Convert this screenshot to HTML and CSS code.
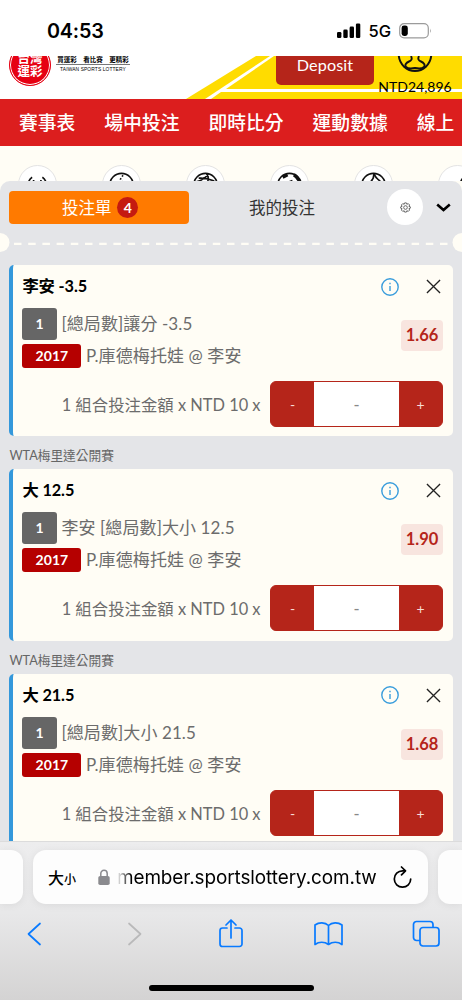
FILE: index.html
```html
<!DOCTYPE html>
<html lang="zh-Hant">
<head>
<meta charset="utf-8">
<meta name="viewport" content="width=device-width">
<title>台灣運彩</title>
<link rel="stylesheet" href="styles.css">
</head>
<body>
<div class="phone">
  <div class="status">
    <span class="clock">04:53</span>
    <svg class="signal" width="24" height="16" viewBox="0 0 24 16"><rect x="0" y="9" width="4.4" height="6" rx="1.3"/><rect x="6.3" y="6.6" width="4.4" height="8.4" rx="1.3"/><rect x="12.6" y="3.6" width="4.4" height="11.4" rx="1.3"/><rect x="18.9" y="0.4" width="4.4" height="14.6" rx="1.3"/></svg>
    <span class="net">5G</span>
    <svg class="battery" width="33" height="16" viewBox="0 0 33 16"><rect x=".7" y=".7" width="28.6" height="14.2" rx="4.4" fill="none" stroke="#9b9b9b" stroke-width="1.2"/><rect x="2.6" y="2.6" width="6.2" height="10.4" rx="2.4"/><path d="M31 5.5q1.6 2.3 0 4.6z" fill="#9b9b9b"/></svg>
  </div>

  <header class="brandbar">
    <svg class="stripes" width="462" height="43" viewBox="0 0 462 43" fill="#ffdc00"><path d="M186 43 256 0H270L205 43z"/><path d="M274 0H462V33H226z"/><path d="M221 36H462V43H211z"/></svg>
    <div class="seal"><span>台灣</span><span>運彩</span></div>
    <div class="slogan"><b>買運彩　看比賽　更精彩</b><small>TAIWAN SPORTS LOTTERY</small></div>
    <div class="deposit">Deposit</div>
    <div class="account">
      <svg width="36" height="18" viewBox="0 0 36 18" fill="none" stroke="#111"><path d="M1.8 0a16.300 16.800 0 0 0 32.400 0" stroke-width="2"/><path d="M14 0c1.500 3 .5 4.500-2 5.500C9 6.700 7.500 9 9 10.800c1.700 2 6 1.800 9 1.200 3 .6 7.300.8 9-1.200C28.500 9 27 6.700 24 5.500 21.500 4.500 20.500 3 22 0" stroke-width="1.900"/></svg>
      <span>NTD24,896</span>
    </div>
  </header>

  <nav class="menu"><span>賽事表</span><span>場中投注</span><span>即時比分</span><span>運動數據</span><span>線上</span></nav>

  <div class="page">
    <div class="sports">
      <i><svg viewBox="0 0 38 38"><path d="M13.500 11.500q-3 2-4 6M24 11.500q3 2 4 6M15 14.500v2M22.500 14.500v2"/></svg></i>
      <i><svg viewBox="0 0 38 38"><circle cx="19" cy="19.500" r="12"/><path d="M20.500 9.500l-2.500 4 2 3" stroke-dasharray="1.600 2"/></svg></i>
      <i><svg viewBox="0 0 38 38"><circle cx="19" cy="19.500" r="12"/><path d="M12 12.500q8-.5 16 3M20 8q3 3 1 9M8 16.500q8-1 14-8"/></svg></i>
      <i><svg viewBox="0 0 38 38"><circle cx="19" cy="19.500" r="12"/><path d="M12 11.500l5-2.500M23.500 9q4 2.500 5.500 6.500" stroke-width="3.400"/><path d="M18 16.500l4-1.500"/></svg></i>
      <i><svg viewBox="0 0 38 38"><circle cx="19" cy="19.500" r="12"/><path d="M19.500 8q0 6-5 9.500M20 8.500q1 4 6 7"/></svg></i>
      <i><svg viewBox="0 0 38 38"><path d="M21 19l3-6" stroke-width="2"/></svg></i>
    </div>

    <main class="sheet">
      <div class="tabs">
        <div class="tab active">投注單<b>4</b></div>
        <div class="tab">我的投注</div>
        <div class="gear"><svg width="11" height="11" viewBox="0 0 24 24" fill="none" stroke="#555" stroke-width="1.900"><circle cx="12" cy="12" r="4"/><path d="M10 2h4l1 3 3-1.500 3 3L19.500 9.500l3 1v3l-3 1 1.500 3-3 3-3-1.500-1 3h-4l-1-3-3 1.500-3-3 1.500-3-3-1v-3l3-1L3 6.500l3-3L9 5z"/></svg></div>
        <svg class="chev" width="15" height="10" viewBox="0 0 15 10" fill="none" stroke="#000" stroke-width="2.600"><path d="M1.200 1.500l6.300 5.500 6.300-5.500"/></svg>
      </div>
      <div class="tear"><svg width="462" height="20"><circle cx="0" cy="9.500" r="9.500"/><circle cx="462" cy="9.500" r="9.500"/><path d="M14 10.800H449" stroke-dasharray="7.500 6.700"/></svg></div>

      <section class="bet">
        <div class="top"><h2>李安 -3.5</h2><svg class="info" viewBox="0 0 18 18"><circle cx="9" cy="9" r="8.200"/><path d="M9 8v5M9 4.800v1.500"/></svg><svg class="close" viewBox="0 0 16 16"><path d="M1 1l14 14M15 1L1 15"/></svg></div>
        <div class="body">
          <div class="lines"><p><em class="num">1</em><span>[總局數]讓分 -3.5</span></p><p><em class="code">2017</em><span>P.庫德梅托娃 @ 李安</span></p></div>
          <strong class="odds">1.66</strong>
        </div>
        <div class="stake"><span>1 組合投注金額 x NTD 10 x</span><div class="step"><b>-</b><u>-</u><b>+</b></div></div>
      </section>
      <h3>WTA梅里達公開賽</h3>
      <section class="bet">
        <div class="top"><h2>大 12.5</h2><svg class="info" viewBox="0 0 18 18"><circle cx="9" cy="9" r="8.200"/><path d="M9 8v5M9 4.800v1.500"/></svg><svg class="close" viewBox="0 0 16 16"><path d="M1 1l14 14M15 1L1 15"/></svg></div>
        <div class="body">
          <div class="lines"><p><em class="num">1</em><span>李安 [總局數]大小 12.5</span></p><p><em class="code">2017</em><span>P.庫德梅托娃 @ 李安</span></p></div>
          <strong class="odds">1.90</strong>
        </div>
        <div class="stake"><span>1 組合投注金額 x NTD 10 x</span><div class="step"><b>-</b><u>-</u><b>+</b></div></div>
      </section>
      <h3>WTA梅里達公開賽</h3>
      <section class="bet">
        <div class="top"><h2>大 21.5</h2><svg class="info" viewBox="0 0 18 18"><circle cx="9" cy="9" r="8.200"/><path d="M9 8v5M9 4.800v1.500"/></svg><svg class="close" viewBox="0 0 16 16"><path d="M1 1l14 14M15 1L1 15"/></svg></div>
        <div class="body">
          <div class="lines"><p><em class="num">1</em><span>[總局數]大小 21.5</span></p><p><em class="code">2017</em><span>P.庫德梅托娃 @ 李安</span></p></div>
          <strong class="odds">1.68</strong>
        </div>
        <div class="stake"><span>1 組合投注金額 x NTD 10 x</span><div class="step"><b>-</b><u>-</u><b>+</b></div></div>
      </section>
    </main>
  </div>

  <footer class="browser">
    <div class="addressrow">
      <div class="peek left"></div>
      <div class="address">
        <span class="aa">大<small>小</small></span>
        <svg class="lock" width="12" height="17" viewBox="0 0 12 17"><rect x="0.300" y="7" width="11.400" height="9" rx="1.800" fill="#8a8a8e"/><path d="M2.800 8V4.500a3.200 3.200 0 0 1 6.400 0V8" fill="none" stroke="#8a8a8e" stroke-width="1.500"/></svg>
        <span class="url">member.sportslottery.com.tw</span>
        <svg class="reload" width="20" height="23" viewBox="0 0 20 23" fill="none" stroke="#000" stroke-width="1.700" stroke-linecap="round" stroke-linejoin="round"><path d="M12.500 4.800H10.500A8.200 8.200 0 1 0 18.700 13"/><path d="M9.500 1l4 3.800-4 4"/></svg>
      </div>
      <div class="peek right"></div>
    </div>
    <div class="tools">
      <svg viewBox="0 0 30 30"><path d="M21 4.500L9.500 15 21 25.500"/></svg>
      <svg class="off" viewBox="0 0 30 30"><path d="M12 4.500L23.500 15 12 25.500"/></svg>
      <svg viewBox="0 0 30 30"><path d="M11 9H6.500a2.500 2.500 0 0 0-2.500 2.500V25a2.500 2.500 0 0 0 2.500 2.500h17A2.500 2.500 0 0 0 26 25V11.500A2.500 2.500 0 0 0 23.500 9H19M15 19V1M10 6l5-5 5 5"/></svg>
      <svg viewBox="0 0 30 30"><path d="M14.500 6.500C11 3 5 3 1 6v19.500c4-3 9.500-3 13.500 0 4-3 9.500-3 13.500 0V6C24 3 18 3 14.500 6.500zM14.500 6.500v19"/></svg>
      <svg viewBox="0 0 30 30"><rect x="8" y="8.500" width="19" height="18.500" rx="3"/><path d="M7.500 21.500H4.500a3 3 0 0 1-3-3V5.500a3 3 0 0 1 3-3h13.500a3 3 0 0 1 3 3v2.500"/></svg>
    </div>
    <div class="home"></div>
  </footer>
</div>
</body>
</html>
```
FILE: styles.css
```css
* { box-sizing: border-box; margin: 0; padding: 0; }
body { background: #fff; font-family: Lato, "Noto Sans CJK TC", sans-serif; color: #000; }
svg { display: block; flex: none; }
i, em { font-style: normal; }
.phone { width: 462px; height: 1000px; overflow: hidden; display: flex; flex-direction: column; white-space: nowrap; }

.status { height: 56px; flex: none; display: flex; align-items: center; padding: 6px 30px 0 47px; font-family: Inter, sans-serif; }
.clock { font-size: 19.800px; font-weight: 600; letter-spacing: -.2px; flex: 1; }
.net { font-size: 16.500px; font-weight: 500; margin: 0 8px 0 7px; }
.signal { margin-left: -1px; }

.brandbar { height: 43px; flex: none; position: relative; overflow: hidden; display: flex; align-items: flex-start; }
.stripes { position: absolute; left: 0; top: 0; }
.brandbar > div { position: relative; }
.seal { width: 42px; height: 42px; margin: -12px 0 0 9px; flex: none; border-radius: 50%; border: 1px solid #e60012; box-shadow: inset 0 0 0 1px #fff; background: #e60012; color: #fff; font-size: 12.500px; font-weight: 600; line-height: 13px; display: flex; flex-direction: column; align-items: center; padding-top: 7px; }
.slogan { width: 74px; margin: -1px 0 0 5px; display: flex; flex-direction: column; align-items: center; font-size: 6.500px; line-height: 9px; }
.slogan b { width: 100%; border-bottom: 1px solid #777; text-align: center; }
.slogan small { font: 4.900px/8px "Liberation Sans", sans-serif; letter-spacing: .1px; margin-top: 1px; }
.deposit { margin: -10px 0 0 146px; width: 98px; height: 39px; background: #b5251a; border-radius: 5px; color: #fff; font-size: 16.200px; line-height: 38px; text-align: center; letter-spacing: .1px; }
.account { display: flex; flex-direction: column; align-items: center; margin-left: 3px; width: 76px; font-size: 14px; line-height: 25px; }

.menu { height: 47px; flex: none; background: #dc1e1e; color: #fff; display: flex; gap: 29px; padding-left: 19px; align-items: center; font-size: 18.800px; font-weight: 500; line-height: 47px; }

.page { height: 695px; flex: none; background: #fffdf5; overflow: hidden; }
.sports { height: 35px; overflow: hidden; display: flex; gap: 45px; padding: 19px 0 0 18px; }
.sports i { width: 39px; height: 39px; flex: none; border: 1px solid #e3e3e3; border-radius: 50%; background: #fff; }
.sports svg { fill: none; stroke: #111; stroke-width: 1.700; }

.sheet { height: 660px; overflow: hidden; background: #e4e5e8; border-radius: 10px 10px 0 0; padding: 0 9.500px 0 9.400px; }
.tabs { height: 52px; display: flex; align-items: center; }
.tab { width: 179.500px; height: 33px; display: flex; align-items: center; justify-content: center; font-size: 16.500px; color: #333; }
.tab.active { background: #ff7a00; color: #fff; border-radius: 4px; gap: 6px; padding-left: 2px; }
.tab b { width: 21px; height: 21px; border-radius: 50%; background: #c51a10; font-size: 14px; line-height: 21px; text-align: center; }
.tab:nth-child(2) { width: 186px; }
.gear { width: 36px; height: 36px; border-radius: 50%; background: #fff; display: flex; align-items: center; justify-content: center; margin-left: 12.500px; }
.chev { margin: 2px 0 0 13px; }
.tear { margin: 0 -9.400px; height: 32px; }
.tear svg { fill: #fffdf5; stroke: none; }
.tear path { stroke: #fffdf5; stroke-width: 2.300; }

.bet { height: 171.200px; background: #fffdf5; border-left: 4px solid #3498db; border-radius: 5px; padding: 9px 9.500px 0 9px; color: #6c6c6c; }
.top { display: flex; align-items: center; height: 25px; color: #000; }
.top h2 { flex: 1; font-size: 16.300px; line-height: 24px; padding-bottom: 1px; font-weight: 700; letter-spacing: -.1px; }
.info { width: 18px; height: 18px; fill: none; stroke: #3a9ddc; stroke-width: 1.400; }
.close { width: 15px; height: 15px; fill: none; stroke: #222; stroke-width: 1.400; margin: 0 2.500px 0 27px; }
.body { display: flex; justify-content: space-between; height: 69px; padding-top: 9px; }
.lines p { display: flex; align-items: center; font-size: 17px; letter-spacing: .1px; line-height: 32px; height: 32px; gap: 4.500px; }
.lines em { color: #fff; font-weight: 700; font-size: 14px; text-align: center; border-radius: 3px; }
.num { width: 34.500px; height: 32px; background: #666; line-height: 32px; }
.code { width: 59px; height: 24px; background: #b50000; line-height: 24px; }
.odds { width: 42px; height: 31px; margin-top: 12px; border-radius: 4px; background: #f8e5df; color: #b5251a; font-size: 16.500px; line-height: 31px; text-align: center; }
.stake { display: flex; justify-content: flex-end; align-items: center; margin-top: 13px; gap: 9.500px; font-size: 16.400px; }
.step { width: 173px; height: 46px; border: 1px solid #b5251a; border-radius: 6px; background: #b5251a; display: flex; overflow: hidden; }
.step b, .step u { text-decoration: none; font-weight: 400; text-align: center; line-height: 45px; }
.step b { width: 43px; color: #f7dcd8; font-size: 14px; }
.step u { flex: 1; background: #fff; color: #888; }
h3 { height: 33.300px; line-height: 38px; font-size: 12.700px; font-weight: 400; color: #666; }

.browser { height: 159px; flex: none; background: linear-gradient(#ededee, #e8e8e9 45%, #d4d3d3); border-top: 1px solid #dcdcdc; }
.addressrow { display: flex; gap: 10px; padding-top: 8px; }
.peek, .address { height: 54px; background: #fdfdfd; box-shadow: 0 1px 8px #0001; }
.left { width: 23px; border-radius: 0 12px 12px 0; }
.right { width: 24px; border-radius: 12px 0 0 12px; }
.address { width: 395.500px; border-radius: 13px; display: flex; align-items: center; padding: 0 16px 0 15px; }
.aa { font-size: 16px; font-weight: 500; width: 50px; }
.aa small { font-size: 12px; }
.url { font-family: Inter, sans-serif; font-size: 18.900px; letter-spacing: -.07px; margin-left: 7px; flex: 1; -webkit-mask-image: linear-gradient(90deg, transparent, #000 14px); mask-image: linear-gradient(90deg, transparent, #000 14px); }
.tools { display: flex; justify-content: space-between; padding: 15px 20px 0 19px; height: 79px; }
.tools svg { width: 30px; height: 30px; fill: none; stroke: #087aff; stroke-width: 1.700; stroke-linecap: round; stroke-linejoin: round; }
.tools .off { stroke: #b9b9ba; }
.home { width: 165px; height: 6px; margin: 2px auto 0; border-radius: 3px; background: #000; }
```
